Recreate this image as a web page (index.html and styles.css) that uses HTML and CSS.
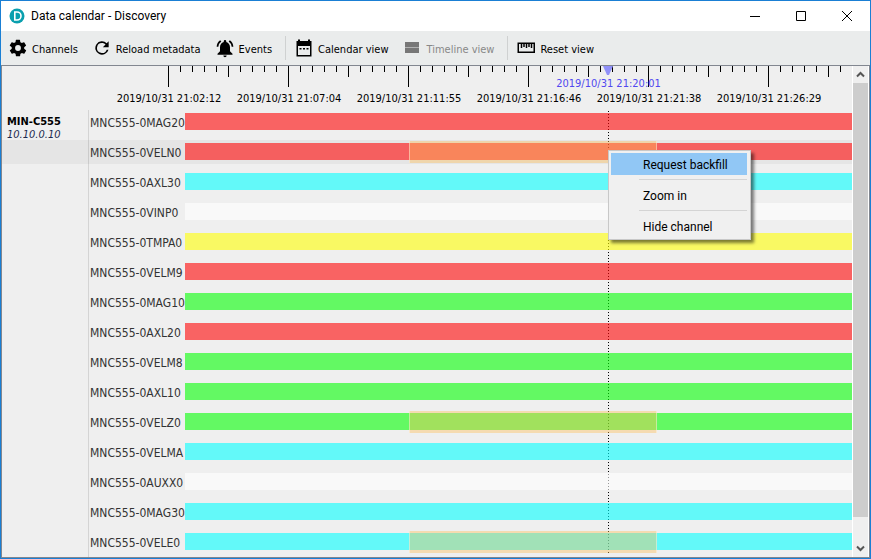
FILE: index.html
```html
<!DOCTYPE html>
<html lang="en">
  <head>
    <meta charset="UTF-8" />
    <meta name="viewport" content="width=device-width, initial-scale=1.0" />
    <title>Data calendar - Discovery</title>
    <link rel="stylesheet" href="styles.css" />
  </head>
  <body>
    <div class="window">
      <header class="titlebar">
        <svg class="titlebar__logo" viewBox="0 0 16 16" aria-hidden="true">
          <circle cx="8" cy="8" r="7.5" fill="#0a9fae" />
          <path d="M5.8 4H8a4 4 0 0 1 0 8H5.800z" fill="none" stroke="#fff" stroke-width="1.6" />
        </svg>
        <h1 class="titlebar__text">Data calendar - Discovery</h1>
        <div class="titlebar__controls">
          <button type="button" aria-label="Minimize">
            <svg viewBox="0 0 12 12"><path d="M1 6.5h10" /></svg>
          </button>
          <button type="button" aria-label="Maximize">
            <svg viewBox="0 0 12 12"><path d="M1.5 1.5h9v9h-9z" /></svg>
          </button>
          <button type="button" aria-label="Close">
            <svg viewBox="0 0 12 12"><path d="M1 1l10 10M11 1L1 11" /></svg>
          </button>
        </div>
      </header>

      <nav class="toolbar">
        <button type="button" class="tool">
          <svg viewBox="0 0 24 24"><path d="M19.4 13a7.5 7.5 0 0 0 0-2l2.1-1.6a.5.5 0 0 0 .1-.7l-2-3.4a.5.5 0 0 0-.6-.2l-2.5 1a7.3 7.3 0 0 0-1.7-1l-.4-2.6a.5.5 0 0 0-.5-.5h-4a.5.5 0 0 0-.5.5l-.4 2.6a7.3 7.3 0 0 0-1.7 1l-2.5-1a.5.5 0 0 0-.6.2l-2 3.4a.5.5 0 0 0 .1.7L4.5 11a7.5 7.5 0 0 0 0 2l-2.1 1.6a.5.5 0 0 0-.1.7l2 3.4a.5.5 0 0 0 .6.2l2.5-1a7.3 7.3 0 0 0 1.7 1l.4 2.6a.5.5 0 0 0 .5.5h4a.5.5 0 0 0 .5-.5l.4-2.6a7.3 7.3 0 0 0 1.7-1l2.5 1a.5.5 0 0 0 .6-.2l2-3.4a.5.5 0 0 0-.1-.7zM12 15.5a3.5 3.5 0 1 1 0-7 3.5 3.5 0 0 1 0 7z" /></svg>
          <span>Channels</span>
        </button>
        <button type="button" class="tool">
          <svg viewBox="0 0 24 24"><path d="M17.65 6.35A8 8 0 1 0 19.73 14h-2.08A6 6 0 1 1 12 6c1.66 0 3.14.69 4.22 1.78L13 11h7V4z" /></svg>
          <span>Reload metadata</span>
        </button>
        <button type="button" class="tool">
          <svg viewBox="0 0 24 24"><path d="M7.58 4.08L6.15 2.65A10.4 10.4 0 0 0 2 10.5h2a8.4 8.4 0 0 1 3.58-6.42zM20 10.5h2a10.4 10.4 0 0 0-4.15-7.85l-1.43 1.43A8.5 8.5 0 0 1 20 10.5zM18 11c0-3.07-1.64-5.64-4.5-6.32V4a1.5 1.5 0 0 0-3 0v.68C7.63 5.36 6 7.92 6 11v5l-3 3v1h18v-1l-3-3zM10 21h4a2 2 0 0 1-4 0z" /></svg>
          <span>Events</span>
        </button>
        <span class="toolbar__line"></span>
        <button type="button" class="tool">
          <svg viewBox="0 0 20 20"><path d="M4 1.5h2V3h8V1.5h2V3h1.5v15.5h-15V3H4zM4 8v9h12V8zM5.5 10h2v1.5h-2zM9 10h2v1.5H9zM12.5 10h2v1.5h-2z" fill-rule="evenodd" /></svg>
          <span>Calendar view</span>
        </button>
        <button type="button" class="tool" disabled>
          <svg viewBox="0 0 20 20"><path d="M3 4h14v5H3zM3 10h14v5H3z" /><path d="M3 9h14v1H3z" opacity=".5" /></svg>
          <span>Timeline view</span>
        </button>
        <span class="toolbar__line"></span>
        <button type="button" class="tool">
          <svg viewBox="0 0 20 20"><path fill="none" stroke="#000" stroke-width="1.5" d="M2.25 5.25h16v9h-16zM5.5 5.5v4.5M8 5.5v3.5M10.5 5.5v4.5M13 5.5v3.5M15.5 5.5v4.5" /></svg>
          <span>Reset view</span>
        </button>
      </nav>

      <main class="view">
        <div class="timeline">
          <div class="ruler">
            <div class="ruler__ticks"></div>
            <div class="ruler__labels">
              <span>2019/10/31 21:02:12</span>
              <span>2019/10/31 21:07:04</span>
              <span>2019/10/31 21:11:55</span>
              <span>2019/10/31 21:16:46</span>
              <span>2019/10/31 21:21:38</span>
              <span>2019/10/31 21:26:29</span>
            </div>
          </div>
          <div class="rows">
            <div class="row">
              <div class="row__station"><b>MIN-C555</b><i>10.10.0.10</i></div>
              <span class="row__name">MNC555-0MAG20</span>
              <div class="bar bar--red"></div>
            </div>
            <div class="row row--active">
              <div class="row__station"></div>
              <span class="row__name">MNC555-0VELN0</span>
              <div class="bar bar--red"><span class="range"></span></div>
            </div>
            <div class="row">
              <div class="row__station"></div>
              <span class="row__name">MNC555-0AXL30</span>
              <div class="bar bar--cyan"></div>
            </div>
            <div class="row">
              <div class="row__station"></div>
              <span class="row__name">MNC555-0VINP0</span>
              <div class="bar bar--white"></div>
            </div>
            <div class="row">
              <div class="row__station"></div>
              <span class="row__name">MNC555-0TMPA0</span>
              <div class="bar bar--yellow"></div>
            </div>
            <div class="row">
              <div class="row__station"></div>
              <span class="row__name">MNC555-0VELM9</span>
              <div class="bar bar--red"></div>
            </div>
            <div class="row">
              <div class="row__station"></div>
              <span class="row__name">MNC555-0MAG10</span>
              <div class="bar bar--green"></div>
            </div>
            <div class="row">
              <div class="row__station"></div>
              <span class="row__name">MNC555-0AXL20</span>
              <div class="bar bar--red"></div>
            </div>
            <div class="row">
              <div class="row__station"></div>
              <span class="row__name">MNC555-0VELM8</span>
              <div class="bar bar--green"></div>
            </div>
            <div class="row">
              <div class="row__station"></div>
              <span class="row__name">MNC555-0AXL10</span>
              <div class="bar bar--green"></div>
            </div>
            <div class="row">
              <div class="row__station"></div>
              <span class="row__name">MNC555-0VELZ0</span>
              <div class="bar bar--green"><span class="range"></span></div>
            </div>
            <div class="row">
              <div class="row__station"></div>
              <span class="row__name">MNC555-0VELMA</span>
              <div class="bar bar--cyan"></div>
            </div>
            <div class="row">
              <div class="row__station"></div>
              <span class="row__name">MNC555-0AUXX0</span>
              <div class="bar bar--white"></div>
            </div>
            <div class="row">
              <div class="row__station"></div>
              <span class="row__name">MNC555-0MAG30</span>
              <div class="bar bar--cyan"></div>
            </div>
            <div class="row">
              <div class="row__station"></div>
              <span class="row__name">MNC555-0VELE0</span>
              <div class="bar bar--cyan"><span class="range"></span></div>
            </div>
          </div>

          <div class="cursor">
            <svg class="cursor__mark" viewBox="0 0 10 9"><path d="M0 0h10L6 9H4z" /></svg>
            <span class="cursor__time">2019/10/31 21:20:01</span>
            <span class="cursor__line"></span>
          </div>

          <div class="menu" role="menu">
            <button type="button" role="menuitem" class="menu__item menu__item--active">Request backfill</button>
            <hr class="menu__line" />
            <button type="button" role="menuitem" class="menu__item">Zoom in</button>
            <hr class="menu__line" />
            <button type="button" role="menuitem" class="menu__item">Hide channel</button>
          </div>
        </div>

        <div class="scroll">
          <button type="button" class="scroll__button" aria-label="Scroll up">
            <svg viewBox="0 0 9 7"><path d="M1 5.5L4.5 2 8 5.5" /></svg>
          </button>
          <div class="scroll__track"><div class="scroll__thumb"></div></div>
          <button type="button" class="scroll__button" aria-label="Scroll down">
            <svg viewBox="0 0 9 7"><path d="M1 1.5L4.5 5 8 1.5" /></svg>
          </button>
        </div>
      </main>
    </div>
  </body>
</html>
```

FILE: styles.css
```css
* {
  box-sizing: border-box;
}

body {
  margin: 0;
  font-family: "DejaVu Sans Condensed", "Noto Sans", sans-serif;
  font-size: 11px;
  color: #000;
}

button {
  margin: 0;
  padding: 0;
  border: 0;
  background: none;
  font: inherit;
  color: inherit;
}

svg {
  display: block;
}

.window {
  display: flex;
  flex-direction: column;
  min-height: 100vh;
  border: 1px solid #1a7fd4;
  background: #efefef;
}

/* title bar */
.titlebar {
  display: flex;
  align-items: center;
  height: 30px;
  padding-left: 8px;
  background: #fff;
}

.titlebar__logo {
  width: 16px;
  height: 16px;
}

.titlebar__text {
  flex: 1;
  margin: 0 0 0 6px;
  font: 12px/16px Roboto, "Open Sans", sans-serif;
}

.titlebar__controls {
  display: flex;
}

.titlebar__controls button {
  display: flex;
  align-items: center;
  justify-content: center;
  width: 46px;
  height: 30px;
}

.titlebar__controls svg {
  width: 12px;
  height: 12px;
  fill: none;
  stroke: #000;
}

/* toolbar */
.toolbar {
  display: flex;
  align-items: center;
  height: 34px;
  background: #eaecec;
}

.tool {
  display: flex;
  align-items: center;
  gap: 4px;
  height: 24px;
  padding: 0 7px;
  white-space: nowrap;
}

.tool svg {
  width: 20px;
  height: 20px;
}

.tool span {
  padding-top: 2px;
}

.tool:disabled {
  color: #888;
  fill: #777;
}

.toolbar__line {
  width: 1px;
  height: 24px;
  margin: 0 1px 0 6px;
  background: #cfd1d1;
}

/* timeline */
.view {
  display: flex;
  flex: 1;
  border: 1px solid #828790;
}

.timeline {
  position: relative;
  flex: 1;
  min-width: 0;
}

.ruler {
  height: 44px;
  overflow: hidden;
}

.ruler__ticks {
  height: 21px;
  margin-left: 166px;
  background-image:
    repeating-linear-gradient(to right, #000 0 1px, transparent 1px 120px),
    repeating-linear-gradient(to right, #000 0 1px, transparent 1px 60px),
    repeating-linear-gradient(to right, #000 0 1px, transparent 1px 12px);
  background-size: 100% 21px, 100% 11px, 100% 6px;
  background-repeat: no-repeat;
}

.ruler__labels {
  display: flex;
  margin-left: 107px;
  padding-top: 4px;
}

.ruler__labels span {
  flex: 0 0 120px;
  line-height: 16px;
  text-align: center;
  white-space: nowrap;
}

.rows {
  display: flex;
  flex-direction: column;
  gap: 6px;
  padding-bottom: 3px;
  background: linear-gradient(#d4d4d4, #d4d4d4) 86px 0 / 1px 100% no-repeat;
}

.row {
  display: grid;
  grid-template-columns: 87px 96px 1fr;
  height: 24px;
}

.row--active {
  background: rgba(0, 0, 0, 0.04);
}

.row__station {
  padding: 5px 0 0 5px;
  line-height: 13px;
}

.row__station b,
.row__station i {
  display: block;
}

.row__station i {
  color: #1c2a50;
}

.row__name {
  padding-left: 1px;
  font-size: 12px;
  line-height: 26px;
  color: #333;
  white-space: nowrap;
}

/* bars are see-through so the cursor line shows under them */
.bar {
  position: relative;
  z-index: 1;
  height: 17px;
  margin-top: 3px;
}

.bar--red {
  background: rgba(255, 5, 5, 0.6);
}

.bar--cyan {
  background: rgba(5, 255, 255, 0.6);
}

.bar--green {
  background: rgba(5, 255, 5, 0.6);
}

.bar--yellow {
  background: rgba(255, 255, 5, 0.6);
}

.bar--white {
  background: rgba(255, 255, 255, 0.6);
}

.range {
  position: absolute;
  top: -2px;
  bottom: -3px;
  left: 33.6%;
  width: 37.2%;
  border: solid rgba(255, 255, 255, 0.4);
  border-width: 0 1px;
  background: rgba(255, 190, 86, 0.4);
}

.cursor {
  position: absolute;
  top: 0;
  bottom: 0;
  left: 606px;
  width: 1px;
}

.cursor__mark {
  position: absolute;
  top: 0;
  left: -5px;
  width: 10px;
  height: 9px;
  fill: #9090f8;
}

.cursor__time {
  position: absolute;
  top: 10px;
  left: 50%;
  line-height: 16px;
  color: #5048f0;
  white-space: nowrap;
  transform: translateX(-50%);
}

.cursor__line {
  position: absolute;
  top: 45px;
  bottom: 2px;
  width: 1px;
  background: repeating-linear-gradient(#000 0 1px, transparent 1px 3px);
}

/* context menu */
.menu {
  position: absolute;
  z-index: 2;
  top: 84px;
  left: 606px;
  width: 143px;
  padding: 2px 3px 2px 2px;
  border: 1px solid #c8c8c8;
  background: #f0f0f0;
  box-shadow: 3px 3px 3px rgba(0, 0, 0, 0.5);
  font: 12px/22px Roboto, "Open Sans", sans-serif;
}

.menu__item {
  display: block;
  width: 100%;
  height: 22px;
  padding: 1px 0 0 32px;
  text-align: left;
}

.menu__item--active {
  background: #91c7f5;
}

.menu__line {
  height: 1px;
  margin: 4px 0 4px 28px;
  border: 0;
  background: #d4d4d4;
}

/* scroll bar */
.scroll {
  display: flex;
  flex-direction: column;
  width: 17px;
  border: solid #fff;
  border-width: 0 1px;
}

.scroll__button {
  display: flex;
  align-items: center;
  justify-content: center;
  height: 17px;
}

.scroll__button svg {
  width: 9px;
  height: 7px;
  fill: none;
  stroke: #555;
  stroke-width: 2;
}

.scroll__track {
  flex: 1;
}

.scroll__thumb {
  height: 95%;
  background: #cdcdcd;
}
```
